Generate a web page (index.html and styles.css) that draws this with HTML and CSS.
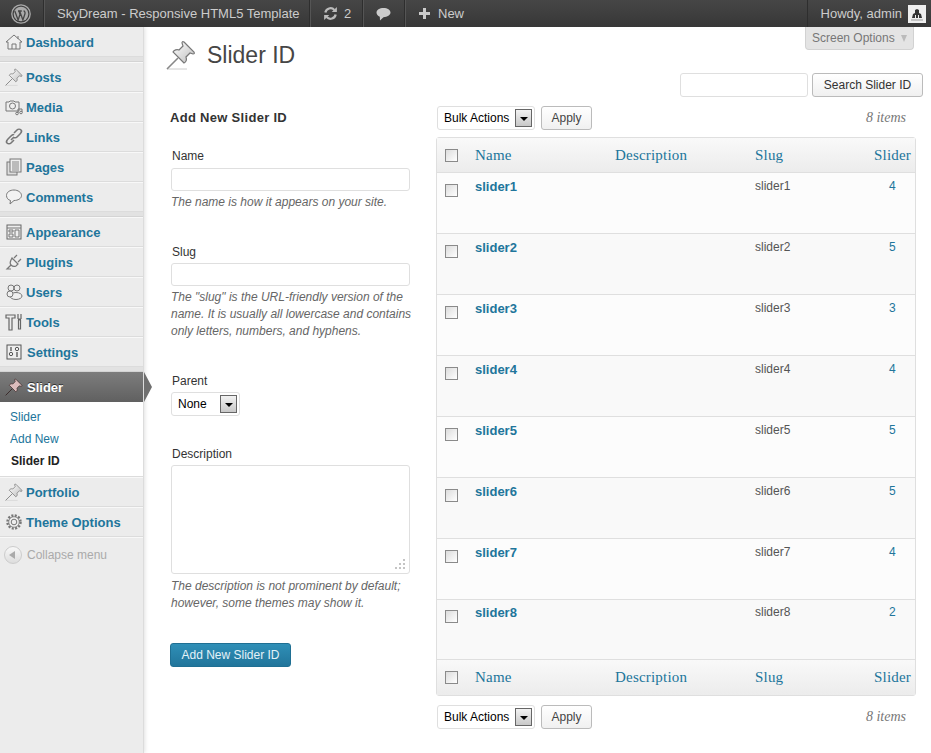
FILE: index.html
```html
<!DOCTYPE html>
<html lang="en">
<head>
  <meta charset="UTF-8" />
  <title>Slider ID</title>
  <link rel="stylesheet" href="styles.css">
</head>
<body>
  <svg width="0" height="0" class="defs">
    <defs>
      <linearGradient id="pinfill" x1="0" y1="0" x2="1" y2="1">
        <stop offset="0" stop-color="#fff"/>
        <stop offset="1" stop-color="#bdbdbd"/>
      </linearGradient>
      <g id="pin">
        <path d="M1 29h20" stroke="#ccc" stroke-width="1"/>
        <path d="M1 29L12 18" stroke="#888" stroke-width="1.600"/>
        <path d="M18 2l10 10q1 2-1 2l-3-1-4 4c1 3 0 5-2 6L7 12c1-2 4-3 6-2l4-4-1-3q0-2 2-1z" fill="url(#pinfill)" stroke="#777" stroke-width="1.200"/>
      </g>
    </defs>
  </svg>

  <div class="adminbar">
    <div class="bar-item bar-logo">
      <svg width="20" height="20" viewBox="0 0 20 20"><circle cx="10" cy="10" r="9.200" fill="none" stroke="#aaa" stroke-width="1.300"/><circle cx="10" cy="10" r="7.300" fill="#aaa"/><path d="M3.800 7l3.300 9 1.900-5.500-1-3.500M7 7h3.800M8.600 7l3.300 9 2-6c.5-1.500-.2-3-1.300-3" fill="none" stroke="#464646" stroke-width="1.300"/></svg>
    </div>
    <div class="bar-item bar-title">SkyDream - Responsive HTML5 Template</div>
    <div class="bar-item bar-updates">
      <svg width="15" height="15" viewBox="0 0 16 16"><path d="M2.500 7a5.600 5.600 0 0 1 9.600-2.800M13.500 9a5.600 5.600 0 0 1-9.600 2.800" fill="none" stroke="#bbb" stroke-width="2.400"/><path d="M14.800 1v5.500H9.300zM1.200 15V9.500h5.500z" fill="#bbb"/></svg>
      <span>2</span>
    </div>
    <div class="bar-item bar-comments">
      <svg width="15" height="14" viewBox="0 0 15 14"><path d="M7.500 1C3.600 1 .5 3 .5 5.600c0 1.900 1.300 3.300 3.300 4.100L4 13.500l3.500-3.300c3.900 0 7-2 7-4.600S11.400 1 7.500 1z" fill="#ccc"/></svg>
    </div>
    <div class="bar-item bar-new">
      <svg width="11" height="11" viewBox="0 0 11 11"><path d="M4 0h3v4h4v3H7v4H4V7H0V4h4z" fill="#ccc"/></svg>
      <span>New</span>
    </div>
    <div class="bar-item bar-howdy">
      <span>Howdy, admin</span>
      <span class="avatar">
        <svg width="16" height="16" viewBox="0 0 16 16"><path d="M3 12l1-4 2-1V4l2-1 2 1v3l2 1 1 4z" fill="#333"/><path d="M6 9h1v3H6zM9 9h1v3H9z" fill="#eee"/><path d="M2 14h12" stroke="#999"/></svg>
      </span>
    </div>
  </div>

  <div class="wrap-all">
    <nav class="sidemenu">
      <ul class="menu-group">
        <li class="menu-item"><svg class="mi" viewBox="0 0 18 18"><path d="M1 9l8-7 8 7-2 0v7H3V9zM7 16v-5h4v5M13 3v3" fill="#eee" stroke="#777"/></svg><a>Dashboard</a></li>
      </ul>
      <div class="menu-sep"></div>
      <ul class="menu-group">
        <li class="menu-item"><svg class="mi" viewBox="0 0 30 30"><use href="#pin"/></svg><a>Posts</a></li>
        <li class="menu-item"><svg class="mi" viewBox="0 0 18 18"><path d="M1 4h3l1-1h4l1 1h4v9H1z" fill="#eee" stroke="#777"/><circle cx="7.500" cy="8" r="3" fill="none" stroke="#777"/><path d="M13 15v-4h4v3" fill="none" stroke="#777"/><circle cx="12" cy="15.500" r="1.300" fill="none" stroke="#777"/><circle cx="16" cy="14.500" r="1.300" fill="none" stroke="#777"/></svg><a>Media</a></li>
        <li class="menu-item"><svg class="mi" viewBox="0 0 18 18"><path d="M9 5l3-3c1-1 3-1 4 0s0 3-1 4l-3 3c-1 1-3 1-3 0M9 9L6 12M9 7c-1-1-2 0-3 1l-3 3c-1 1-2 3-1 4s3 1 4 0l3-3" fill="none" stroke="#777" stroke-width="1.600"/></svg><a>Links</a></li>
        <li class="menu-item"><svg class="mi" viewBox="0 0 18 18"><rect x="2" y="4" width="10" height="13" fill="#ddd" stroke="#777"/><rect x="5" y="1" width="11" height="13" fill="#eee" stroke="#777"/><path d="M7 4h7M7 6h7M7 8h7M7 10h7M7 12h7" stroke="#888"/></svg><a>Pages</a></li>
        <li class="menu-item"><svg class="mi" viewBox="0 0 18 18"><path d="M9 2C5 2 1.500 4 1.500 7.500c0 2.500 1.600 4.300 4 5L5 16l4-3.500c4 0 7.500-2 7.500-5S13 2 9 2z" fill="#f2f2f2" stroke="#777"/></svg><a>Comments</a></li>
      </ul>
      <div class="menu-sep"></div>
      <ul class="menu-group">
        <li class="menu-item"><svg class="mi" viewBox="0 0 18 18"><rect x="2" y="2" width="14" height="14" fill="#eee" stroke="#666"/><path d="M2 5h14M4 7h4v2H4zM4 11h4v3H4zM10 7h4v7h-4z" fill="none" stroke="#777"/></svg><a>Appearance</a></li>
        <li class="menu-item"><svg class="mi" viewBox="0 0 18 18"><path d="M7 5l6 6-2 2c-2 1-4 0-5-1s-1-3 0-5zM9 5l3-3M13 9l3-3M6 12l-4 4h4" fill="#eee" stroke="#777" stroke-width="1.200"/></svg><a>Plugins</a></li>
        <li class="menu-item"><svg class="mi" viewBox="0 0 18 18"><circle cx="6" cy="5" r="3" fill="none" stroke="#777"/><circle cx="12" cy="5" r="3" fill="none" stroke="#777"/><ellipse cx="11" cy="13" rx="6" ry="3.500" fill="#eee" stroke="#777"/><circle cx="5" cy="11" r="3" fill="#eee" stroke="#777"/></svg><a>Users</a></li>
        <li class="menu-item"><svg class="mi" viewBox="0 0 18 18"><path d="M1 2h9v3H7v12H4V5H1zM13 1v5M16 1v5M13 6h3M13.500 7h2v9h-2z" fill="none" stroke="#666" stroke-width="1.200"/></svg><a>Tools</a></li>
        <li class="menu-item"><svg class="mi" viewBox="0 0 18 18"><rect x="2" y="2" width="14" height="14" fill="#eee" stroke="#555"/><path d="M6 4v4M12 9v5" stroke="#555" stroke-width="1.300"/><circle cx="6" cy="11" r="1.700" fill="none" stroke="#555"/><circle cx="12" cy="6" r="1.700" fill="none" stroke="#555"/></svg><a class="shift">Settings</a></li>
      </ul>
      <div class="menu-sep"></div>
      <div class="menu-current">
        <svg class="mi" viewBox="0 0 30 30"><path d="M1 29L12 18" stroke="#3a2a2a" stroke-width="1.600"/><path d="M18 2l10 10q1 2-1 2l-3-1-4 4c1 3 0 5-2 6L7 12c1-2 4-3 6-2l4-4-1-3q0-2 2-1z" fill="#dcbcbc" stroke="#3a2a2a" stroke-width="1.200"/></svg>
        <a class="shift">Slider</a>
      </div>
      <ul class="submenu">
        <li><a>Slider</a></li>
        <li><a>Add New</a></li>
        <li class="sub-current"><a>Slider ID</a></li>
      </ul>
      <ul class="menu-group">
        <li class="menu-item"><svg class="mi" viewBox="0 0 30 30"><use href="#pin"/></svg><a>Portfolio</a></li>
        <li class="menu-item"><svg class="mi" viewBox="0 0 18 18"><circle cx="9" cy="9" r="6.500" fill="none" stroke="#777" stroke-width="2.500" stroke-dasharray="2 1.400"/><circle cx="9" cy="9" r="5.300" fill="#eee" stroke="#777" stroke-width=".8"/><circle cx="9" cy="9" r="2.800" fill="none" stroke="#777"/></svg><a>Theme Options</a></li>
      </ul>
      <div class="collapse">
        <span class="collapse-btn"></span>
        <span>Collapse menu</span>
      </div>
    </nav>

    <main class="content">
      <div class="screen-tab">Screen Options <i class="tab-arrow"></i></div>

      <div class="title-row">
        <svg width="30" height="30" viewBox="0 0 30 30"><use href="#pin"/></svg>
        <h2>Slider ID</h2>
      </div>

      <div class="search-row">
        <input class="field search-field" type="text">
        <button class="btn btn-search">Search Slider ID</button>
      </div>

      <div class="columns">
        <form class="col-left">
          <h3>Add New Slider ID</h3>

          <div class="form-field field-name">
            <label>Name</label>
            <input class="field" type="text">
            <p>The name is how it appears on your site.</p>
          </div>

          <div class="form-field field-slug">
            <label>Slug</label>
            <input class="field" type="text">
            <p>The "slug" is the URL-friendly version of the name. It is usually all lowercase and contains only letters, numbers, and hyphens.</p>
          </div>

          <div class="form-field field-parent">
            <label>Parent</label>
            <div class="select select-parent">None<span class="select-btn"></span></div>
          </div>

          <div class="form-field field-desc">
            <label>Description</label>
            <div class="field textarea">
              <svg class="grip" width="12" height="12" viewBox="0 0 12 12"><path d="M9 1h2v2H9zM5 5h2v2H5zM9 5h2v2H9zM1 9h2v2H1zM5 9h2v2H5zM9 9h2v2H9z" fill="#c4c4c4"/></svg>
            </div>
            <p>The description is not prominent by default; however, some themes may show it.</p>
          </div>

          <button class="btn-primary" type="button">Add New Slider ID</button>
        </form>

        <div class="col-right">
          <div class="tablenav">
            <div class="select select-bulk">Bulk Actions<span class="select-btn"></span></div>
            <button class="btn btn-apply">Apply</button>
            <span class="count">8 items</span>
          </div>

          <table class="list">
            <thead>
              <tr>
                <th class="c-check"><span class="check"></span></th>
                <th class="c-name">Name</th>
                <th class="c-desc">Description</th>
                <th class="c-slug">Slug</th>
                <th class="c-slider">Slider</th>
              </tr>
            </thead>
            <tbody>
              <tr class="alt"><td class="c-check"><span class="check"></span></td><td class="c-name"><a>slider1</a></td><td></td><td class="c-slug">slider1</td><td class="c-num"><a>4</a></td></tr>
              <tr><td class="c-check"><span class="check"></span></td><td class="c-name"><a>slider2</a></td><td></td><td class="c-slug">slider2</td><td class="c-num"><a>5</a></td></tr>
              <tr class="alt"><td class="c-check"><span class="check"></span></td><td class="c-name"><a>slider3</a></td><td></td><td class="c-slug">slider3</td><td class="c-num"><a>3</a></td></tr>
              <tr><td class="c-check"><span class="check"></span></td><td class="c-name"><a>slider4</a></td><td></td><td class="c-slug">slider4</td><td class="c-num"><a>4</a></td></tr>
              <tr class="alt"><td class="c-check"><span class="check"></span></td><td class="c-name"><a>slider5</a></td><td></td><td class="c-slug">slider5</td><td class="c-num"><a>5</a></td></tr>
              <tr><td class="c-check"><span class="check"></span></td><td class="c-name"><a>slider6</a></td><td></td><td class="c-slug">slider6</td><td class="c-num"><a>5</a></td></tr>
              <tr class="alt"><td class="c-check"><span class="check"></span></td><td class="c-name"><a>slider7</a></td><td></td><td class="c-slug">slider7</td><td class="c-num"><a>4</a></td></tr>
              <tr class="last"><td class="c-check"><span class="check"></span></td><td class="c-name"><a>slider8</a></td><td></td><td class="c-slug">slider8</td><td class="c-num"><a>2</a></td></tr>
            </tbody>
            <tfoot>
              <tr>
                <th class="c-check"><span class="check"></span></th>
                <th class="c-name">Name</th>
                <th class="c-desc">Description</th>
                <th class="c-slug">Slug</th>
                <th class="c-slider">Slider</th>
              </tr>
            </tfoot>
          </table>

          <div class="tablenav tablenav-bottom">
            <div class="select select-bulk">Bulk Actions<span class="select-btn"></span></div>
            <button class="btn btn-apply">Apply</button>
            <span class="count">8 items</span>
          </div>
        </div>
      </div>
    </main>
  </div>
</body>
</html>
```

FILE: styles.css
```css
* {
  box-sizing: border-box;
  margin: 0; padding: 0;
}

html, body {
  height: 753px;
  overflow: hidden;
}

body {
  font-family: "Liberation Sans", Arial, sans-serif;
  font-size: 12px;
  color: #333;
  background: #fff;
}

ul { list-style: none; }

.defs { position: absolute; }

/* top bar */
.adminbar {
  display: flex;
  height: 27px;
  background: linear-gradient(#464646, #373737);
  color: #ccc;
  font-size: 13px;
  line-height: 27px;
}

.bar-item {
  display: flex;
  align-items: center;
  flex: none;
  border-right: 1px solid #2e2e2e;
  box-shadow: 1px 0 0 #555;
}

.bar-logo { width: 44px; padding-left: 11px; }
.bar-title { width: 266px; padding-left: 13px; }
.bar-updates { gap: 6px; width: 53px; padding-left: 13px; }
.bar-comments { width: 42px; padding-left: 13px; }
.bar-new { gap: 8px; padding-left: 14px; border-right: 0; box-shadow: none; }

.bar-howdy {
  margin-left: auto;
  gap: 6px;
  padding: 0 5px 0 13px;
  border-right: 0;
  border-left: 1px solid #2e2e2e;
  box-shadow: none;
}

.avatar {
  display: flex;
  align-items: center;
  justify-content: center;
  width: 18px;
  height: 18px;
  background: #eee;
}

.wrap-all {
  display: flex;
  height: 726px;
}

/* left menu */
.sidemenu {
  width: 144px;
  flex: none;
  background: #ececec;
  border-right: 1px solid #dcdcdc;
  box-shadow: 1px 0 4px rgba(0,0,0,0.12);
}

.menu-item {
  display: flex;
  align-items: center;
  height: 30px;
  padding-left: 5px;
  border-top: 1px solid #f8f8f8;
  border-bottom: 1px solid #dcdcdc;
  font-size: 13px;
  font-weight: bold;
  color: #21759b;
}

.menu-group:first-child .menu-item:first-child { border-top: 0; padding-top: 1px; }

.mi {
  width: 18px;
  height: 18px;
  flex: none;
  margin-right: 3px;
}

.shift { margin-left: 1px; }

.menu-sep {
  height: 5px;
  background: #e2e2e2;
  border-bottom: 1px solid #d4d4d4;
}

.menu-current {
  position: relative;
  display: flex;
  align-items: center;
  height: 30px;
  padding-left: 5px;
  background: linear-gradient(#7d7d7d, #606060);
  color: #fff;
  font-size: 13px;
  font-weight: bold;
  text-shadow: 0 -1px 0 #333;
}

/* little arrow that points at the content */
.menu-current::after {
  content: "";
  position: absolute;
  left: 144px;
  top: 0;
  border-left: 8px solid #6f6f6f;
  border-top: 15px solid transparent;
  border-bottom: 15px solid transparent;
}

.submenu {
  background: #fff;
  padding: 4px 0 4px 10px;
  border-bottom: 1px solid #dcdcdc;
}

.submenu li {
  height: 22px;
  line-height: 22px;
  color: #21759b;
}

.submenu .sub-current {
  padding-left: 1px;
  color: #222;
  font-weight: bold;
}

.collapse {
  display: flex;
  align-items: center;
  gap: 5px;
  height: 35px;
  padding-left: 4px;
  color: #aaa;
  border-top: 1px solid #f8f8f8;
}

.collapse-btn {
  position: relative;
  width: 18px;
  height: 18px;
  border-radius: 50%;
  border: 1px solid #ccc;
  background: linear-gradient(#f8f8f8, #ddd);
}

.collapse-btn::after {
  content: "";
  position: absolute;
  left: 4px;
  top: 4px;
  border-right: 6px solid #aaa;
  border-top: 4px solid transparent;
  border-bottom: 4px solid transparent;
}

/* content */
.content {
  position: relative;
  flex: 1;
  padding: 0 15px 0 26px;
}

.screen-tab {
  position: absolute;
  top: 0;
  right: 17px;
  display: flex;
  align-items: center;
  gap: 6px;
  width: 109px;
  height: 23px;
  padding: 0 0 0 6px;
  background: #e4e4e4;
  border: 1px solid #d2d2d2;
  border-top: 0;
  border-radius: 0 0 4px 4px;
  color: #777;
}

.tab-arrow {
  border-top: 7px solid #bbb;
  border-left: 3px solid transparent;
  border-right: 3px solid transparent;
}

.title-row {
  display: flex;
  align-items: center;
  gap: 11px;
  height: 30px;
  margin: 13px 0 0 -4px;
}

.title-row h2 {
  font-size: 23px;
  font-weight: normal;
  color: #464646;
}

.search-row {
  display: flex;
  justify-content: flex-end;
  gap: 4px;
  margin: 3px -7px 0 0;
}

.field {
  display: block;
  width: 239px;
  height: 23px;
  background: #fff;
  border: 1px solid #dfdfdf;
  border-radius: 3px;
}

.search-field { width: 128px; height: 24px; }

.btn {
  height: 24px;
  padding: 0;
  font: 12px "Liberation Sans", Arial, sans-serif;
  color: #333;
  background: linear-gradient(#fff, #f0f0f0);
  border: 1px solid #bbb;
  border-radius: 3px;
}

.btn-search { width: 111px; }

.columns {
  display: flex;
}

.col-left {
  width: 266px;
  flex: none;
}

.col-left h3 {
  font-size: 13px;
  letter-spacing: 0.3px;
  color: #333;
  line-height: 16px;
  margin: 13px 0 0;
}

.form-field { margin-left: 1px; }

.form-field label {
  display: block;
  margin: 0 0 3px 1px;
  line-height: 16px;
  color: #333;
}

.form-field p {
  width: 247px;
  font-style: italic;
  color: #666;
  line-height: 17px;
  margin-top: 3px;
}

.field-name { margin-top: 22px; }
.field-name label { margin-bottom: 4px; }
.field-slug { margin-top: 33px; }
.field-parent { margin-top: 33px; }
.field-desc { margin-top: 30px; }
.field-desc p { margin-top: 4px; }

.select {
  display: flex;
  align-items: center;
  justify-content: space-between;
  height: 24px;
  padding: 0 2px 0 6px;
  background: #fff;
  border: 1px solid #dfdfdf;
  border-radius: 3px;
  color: #000;
}

.select-parent { width: 69px; }
.select-bulk { width: 98px; padding-bottom: 1px; }

.select-btn {
  position: relative;
  width: 17px;
  height: 18px;
  border: 1px solid #666;
  background: linear-gradient(#f2f2f2, #c8c8c8);
}

.select-btn::after {
  content: "";
  position: absolute;
  left: 4px;
  top: 7px;
  border-top: 4px solid #000;
  border-left: 4px solid transparent;
  border-right: 4px solid transparent;
}

.textarea {
  position: relative;
  height: 109px;
}

.grip {
  position: absolute;
  right: 3px;
  bottom: 3px;
}

.btn-primary {
  display: block;
  width: 121px;
  height: 24px;
  margin-top: 31px;
  font: 12px "Liberation Sans", Arial, sans-serif;
  color: #e4f2f8;
  background: linear-gradient(#2f8fb7, #21759b);
  border: 1px solid #1f6f93;
  border-radius: 3px;
}

.col-right {
  flex: 1;
  min-width: 0;
  padding-top: 9px;
}

.tablenav {
  display: flex;
  align-items: center;
  height: 24px;
  margin-left: 1px;
}

.btn-apply { width: 51px; margin-left: 6px; color: #444; }

.count {
  margin-left: auto;
  margin-right: 10px;
  font: italic 14px "Liberation Serif", Georgia, serif;
  color: #777;
}

.tablenav-bottom { margin-top: 9px; }

table.list {
  width: 480px;
  margin-top: 7px;
  border-collapse: separate;
  border-spacing: 0;
  table-layout: fixed;
  border: 1px solid #dfdfdf;
  border-radius: 3px;
  background: #f9f9f9;
}

.list th {
  height: 35px;
  text-align: left;
  font: 15px "Liberation Serif", Georgia, serif;
  letter-spacing: 0.2px;
  color: #21759b;
  background: linear-gradient(#f9f9f9, #ececec);
}

.list thead th { border-bottom: 1px solid #dfdfdf; }

.list td {
  height: 61px;
  vertical-align: top;
  padding-top: 6px;
  border-bottom: 1px solid #dfdfdf;
  background: #f9f9f9;
  color: #555;
}

.list tr.alt td { background: #fcfcfc; }
.list tr.last td { height: 60px; padding-top: 5px; }

.c-check { width: 38px; padding-left: 8px; }
.list th.c-name, .list td.c-name { width: 140px; }
.list th.c-desc { width: 140px; }
.list th.c-slug, .list td.c-slug { width: 119px; }
.list th.c-slider { text-align: left; }

.list td.c-name a {
  font-size: 13px;
  font-weight: bold;
  color: #21759b;
}

.list td.c-num { padding-left: 15px; }
.list td.c-num a { color: #21759b; }
.list td.c-check { padding-top: 11px; padding-left: 8px; }
.list tr.last td.c-check { padding-top: 10px; }

.check {
  display: block;
  width: 13px;
  height: 13px;
  border: 1px solid #8a8a8a;
  background: linear-gradient(135deg, #dcdcdc, #fff);
}
```
